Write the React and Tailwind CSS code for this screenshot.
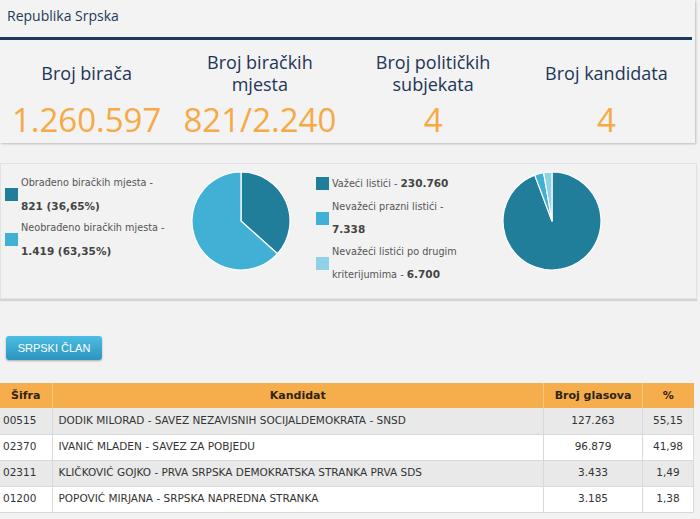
import React from "react";

const stats = [
  { label: ["Broj birača"], value: "1.260.597" },
  { label: ["Broj biračkih", "mjesta"], value: "821/2.240" },
  { label: ["Broj političkih", "subjekata"], value: "4" },
  { label: ["Broj kandidata"], value: "4" },
];

const rows = [
  { sifra: "00515", kandidat: "DODIK MILORAD - SAVEZ NEZAVISNIH SOCIJALDEMOKRATA - SNSD", glasova: "127.263", pct: "55,15" },
  { sifra: "02370", kandidat: "IVANIĆ MLADEN - SAVEZ ZA POBJEDU", glasova: "96.879", pct: "41,98" },
  { sifra: "02311", kandidat: "KLIČKOVIĆ GOJKO - PRVA SRPSKA DEMOKRATSKA STRANKA PRVA SDS", glasova: "3.433", pct: "1,49" },
  { sifra: "01200", kandidat: "POPOVIĆ MIRJANA - SRPSKA NAPREDNA STRANKA", glasova: "3.185", pct: "1,38" },
];

// pie helper: values -> slice paths, starting at 12 o'clock, clockwise
function Pie({ values, colors, size = 100 }) {
  const r = size / 2 - 1;
  const c = size / 2;
  const total = values.reduce((a, b) => a + b, 0);
  let angle = 0;
  return (
    <svg width={size} height={size} viewBox={`0 0 ${size} ${size}`}>
      {values.map((v, i) => {
        const start = angle;
        angle += (v / total) * Math.PI * 2;
        const x1 = c + r * Math.sin(start);
        const y1 = c - r * Math.cos(start);
        const x2 = c + r * Math.sin(angle);
        const y2 = c - r * Math.cos(angle);
        const large = angle - start > Math.PI ? 1 : 0;
        return (
          <path
            key={i}
            d={`M${c},${c} L${x1},${y1} A${r},${r} 0 ${large} 1 ${x2},${y2} Z`}
            fill={colors[i]}
            stroke="#ffffff"
            strokeWidth="1.2"
            strokeLinejoin="round"
          />
        );
      })}
    </svg>
  );
}

function LegendItem({ color, children }) {
  return (
    <div className="flex items-center">
      <span className="w-[13px] h-[13px] shrink-0" style={{ background: color }} />
      <div className="pl-[3px]">{children}</div>
    </div>
  );
}

export default function App() {
  return (
    <div
      className="w-[700px] h-[519px] overflow-hidden bg-[#f2f2f2]"
      style={{ fontFamily: "'DejaVu Sans', sans-serif" }}
    >
      {/* TOP CARD */}
      <div
        className="w-[695px] h-[143px] bg-[#f3f3f3] shadow-[1px_1px_2px_rgba(0,0,0,0.22)]"
        style={{ fontFamily: "'Open Sans', sans-serif" }}
      >
        <div className="h-[37px] pl-[7px] pt-[6px] text-[14px] leading-[20px] text-[#233a58]">
          Republika Srpska
        </div>
        <div className="w-[692px] h-[3px] bg-[#1d3a5f]" />
        <div className="grid grid-cols-4 w-[693px]">
          {stats.map((s, i) => (
            <div key={i} className="flex flex-col items-center">
              <div className="h-[46px] mt-[10px] flex flex-col justify-center items-center text-[18px] leading-[22px] text-[#1e3657]">
                {s.label.map((l, j) => (
                  <span key={j}>{l}</span>
                ))}
              </div>
              <div className="mt-[6px] text-[33px] leading-[36px] text-[#f6a945]">
                {s.value}
              </div>
            </div>
          ))}
        </div>
      </div>

      {/* CHARTS PANEL */}
      <div className="mt-[20px] w-[697px] h-[136px] border border-[#e2e2e2] bg-[#f2f2f2] shadow-[0_2px_1px_rgba(0,0,0,0.12)] flex text-[9.7px] leading-[22.5px] text-[#555]">
        <div className="w-[190px] pl-[4px] pt-[8px] flex flex-col">
          <LegendItem color="#217e9b">
            <div>Obrađeno biračkih mjesta -</div>
            <div className="font-bold text-[#444] text-[10.5px]">821 (36,65%)</div>
          </LegendItem>
          <LegendItem color="#41b0d5">
            <div>Neobrađeno biračkih mjesta -</div>
            <div className="font-bold text-[#444] text-[10.5px]">1.419 (63,35%)</div>
          </LegendItem>
        </div>
        <div className="w-[125px] pt-[7px]">
          <Pie values={[36.65, 63.35]} colors={["#217e9b", "#41b0d5"]} />
        </div>
        <div className="w-[186px] pt-[8px] flex flex-col">
          <LegendItem color="#217e9b">
            <div>
              Važeći listići - <span className="font-bold text-[#444] text-[10.5px]">230.760</span>
            </div>
          </LegendItem>
          <LegendItem color="#41b0d5">
            <div>Nevažeći prazni listići -</div>
            <div className="font-bold text-[#444] text-[10.5px]">7.338</div>
          </LegendItem>
          <LegendItem color="#8fd1e6">
            <div>Nevažeći listići po drugim</div>
            <div>
              kriterijumima - <span className="font-bold text-[#444] text-[10.5px]">6.700</span>
            </div>
          </LegendItem>
        </div>
        <div className="pt-[7px]">
          <Pie values={[230760, 7338, 6700]} colors={["#217e9b", "#41b0d5", "#8fd1e6"]} />
        </div>
      </div>

      {/* BUTTON */}
      <div className="mt-[36px] pl-[6px]">
        <button
          className="w-[96px] h-[24px] rounded-[3px] bg-gradient-to-b from-[#4cbde3] to-[#2b95c0] text-white text-[11px] shadow-[0_1px_2px_rgba(0,0,0,0.3)]"
          style={{ fontFamily: "'Liberation Sans', sans-serif" }}
        >
          SRPSKI ČLAN
        </button>
      </div>

      {/* TABLE */}
      <table className="mt-[23px] w-[694px] border-collapse text-[10.5px] text-[#333]">
        <thead>
          <tr className="h-[25px] bg-[#f6ad4b] text-[#2e2414] font-bold text-[11px]">
            <th className="w-[52px] border-r border-[#f9c880] font-bold">Šifra</th>
            <th className="border-r border-[#f9c880] font-bold">Kandidat</th>
            <th className="w-[99px] border-r border-[#f9c880] font-bold">Broj glasova</th>
            <th className="w-[51px] font-bold">%</th>
          </tr>
        </thead>
        <tbody>
          {rows.map((r, i) => (
            <tr
              key={r.sifra}
              className={`h-[26px] border-b border-[#d9d9d9] ${i % 2 === 0 ? "bg-[#e9e9e9]" : "bg-white"}`}
            >
              <td className="pl-[3px] border-r border-[#d9d9d9]">{r.sifra}</td>
              <td className="pl-[6px] border-r border-[#d9d9d9]">{r.kandidat}</td>
              <td className="text-center border-r border-[#d9d9d9]">{r.glasova}</td>
              <td className="text-center border-r border-[#d9d9d9]">{r.pct}</td>
            </tr>
          ))}
        </tbody>
      </table>
    </div>
  );
}
